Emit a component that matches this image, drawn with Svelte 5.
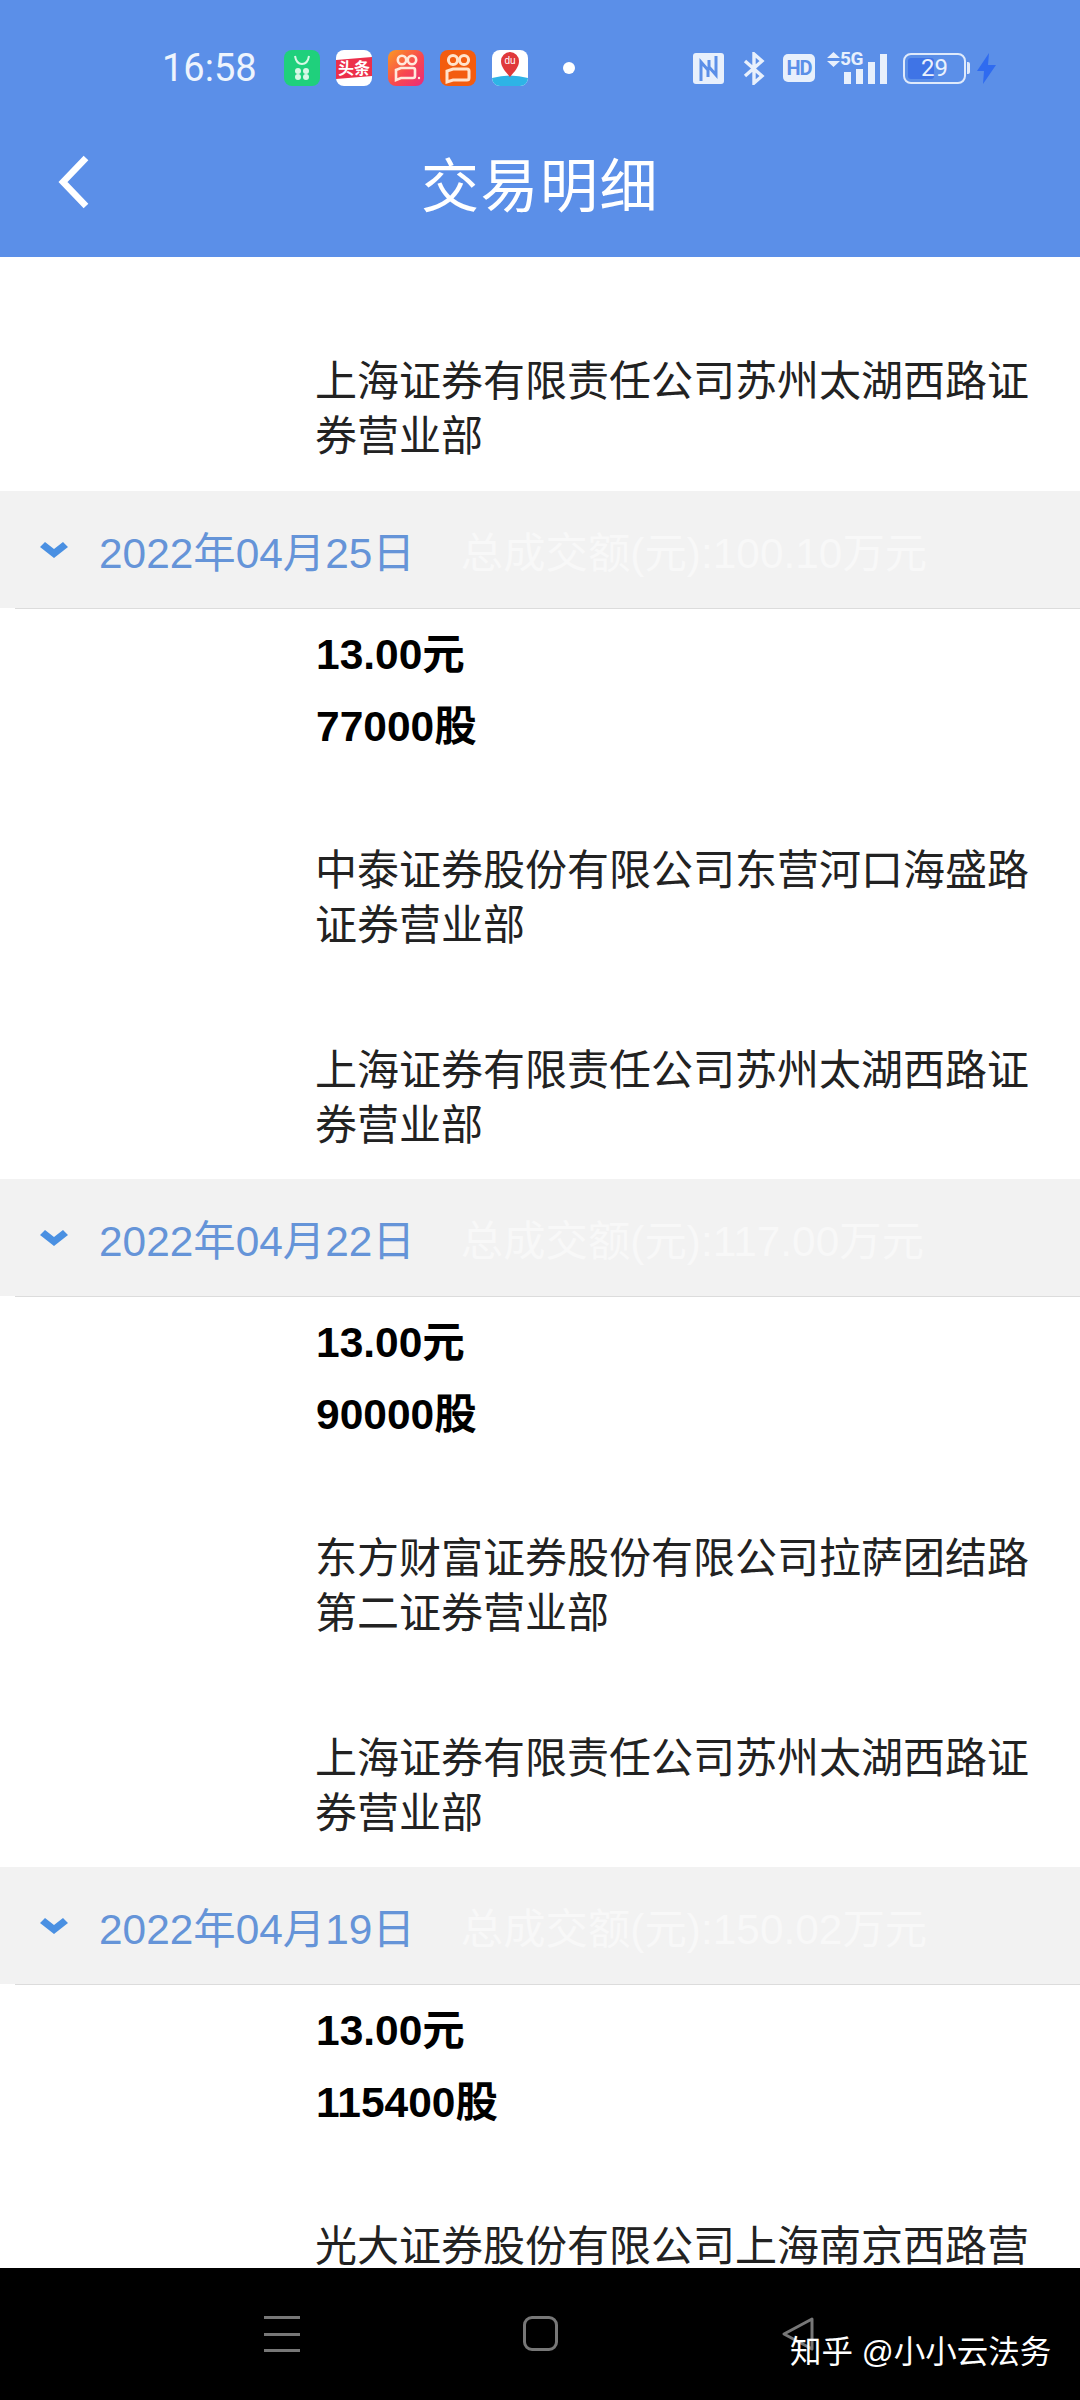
<script>
  const sections = [
    { date: '2022年04月25日', total: '总成交额(元):100.10万元', price: '13.00元', qty: '77000股', buy: '中泰证券股份有限公司东营河口海盛路证券营业部', sell: '上海证券有限责任公司苏州太湖西路证券营业部' },
    { date: '2022年04月22日', total: '总成交额(元):117.00万元', price: '13.00元', qty: '90000股', buy: '东方财富证券股份有限公司拉萨团结路第二证券营业部', sell: '上海证券有限责任公司苏州太湖西路证券营业部' },
    { date: '2022年04月19日', total: '总成交额(元):150.02万元', price: '13.00元', qty: '115400股', buy: '光大证券股份有限公司上海南京西路营业部', sell: '' }
  ];
</script>

<div class="screen">
  <header class="header">
    <div class="status">
      <span class="time">16:58</span>
      <div class="apps">
        <svg class="app" viewBox="0 0 36 36">
          <rect width="36" height="36" rx="8" fill="#1fd07c"/>
          <path d="M11 6c1 6 4 8 7 8s6-2 7-8" fill="none" stroke="#d8f8e6" stroke-width="2"/>
          <g fill="#d8f8e6"><circle cx="14" cy="21" r="3"/><circle cx="22" cy="21" r="3"/><circle cx="14" cy="27" r="3"/><circle cx="22" cy="27" r="3"/></g>
        </svg>
        <svg class="app" viewBox="0 0 36 36">
          <rect width="36" height="36" rx="8" fill="#fff"/>
          <path d="M0 10L36 7V26L0 29Z" fill="#ec2f4b"/>
          <text x="18" y="24" text-anchor="middle" class="toutiao">头条</text>
        </svg>
        <svg class="app" viewBox="0 0 36 36">
          <defs><linearGradient id="ks" x1="0" y1="0" x2="1" y2="1"><stop offset="0" stop-color="#fb9a22"/><stop offset=".55" stop-color="#f8484f"/><stop offset="1" stop-color="#e92a7c"/></linearGradient></defs>
          <rect width="36" height="36" rx="8" fill="url(#ks)"/>
          <g fill="none" stroke="#ffe9dc" stroke-width="2.6"><circle cx="14" cy="10" r="4.2"/><circle cx="24" cy="10" r="4.2"/><path d="M13 18h12a2 2 0 0 1 2 2v6a2 2 0 0 1-2 2H13l-5 2v-10z"/></g>
          <circle cx="31" cy="28" r="1.2" fill="#ffe9dc"/>
        </svg>
        <svg class="app" viewBox="0 0 36 36">
          <rect width="36" height="36" rx="8" fill="#f35c0f"/>
          <g fill="none" stroke="#ffe3cc" stroke-width="3"><circle cx="13" cy="10" r="4.6"/><circle cx="24" cy="10" r="4.6"/><path d="M13 19h14a2 2 0 0 1 2 2v7a2 2 0 0 1-2 2H13l-6 2v-11z"/></g>
        </svg>
        <svg class="app" viewBox="0 0 36 36">
          <rect width="36" height="36" rx="8" fill="#fff"/>
          <path d="M0 28q18-5 36 0v0a8 8 0 0 1-8 8H8a8 8 0 0 1-8-8z" fill="#2eb4e6"/>
          <path d="M18 27C13 21 9 17 9 11a9 9 0 0 1 18 0c0 6-4 10-9 16z" fill="#e0393b"/>
          <text x="18" y="14" text-anchor="middle" class="du">du</text>
        </svg>
      </div>
      <span class="dot"></span>
      <div class="sys">
        <svg class="nfc" viewBox="0 0 31 31"><rect width="31" height="31" rx="3" fill="#e8f0fc"/><path d="M8 28V9l7 8v7M23 3v19l-7-8V7" fill="none" stroke="#5b8fe8" stroke-width="3"/></svg>
        <svg class="bt" viewBox="0 0 22 33"><path d="M2 9l17 15-8 7V2l8 7L2 24" fill="none" stroke="#e8f0fc" stroke-width="3.4"/></svg>
        <span class="hd">HD</span>
        <div class="net">
          <svg class="arrows" viewBox="0 0 13 15"><path d="M6.5 0L13 6H0zM0 9h13l-6.5 6z" fill="#e8f0fc"/></svg>
          <span class="fiveg">5G</span>
          <div class="bars"><i class="b1"></i><i class="b2"></i><i class="b3"></i><i class="b4"></i></div>
        </div>
        <div class="batt">
          <div class="batt-body"><span class="batt-fill"></span><span class="batt-num">29</span></div>
          <span class="nub"></span>
        </div>
        <svg class="bolt" viewBox="0 0 19 31"><path d="M12 0L0 18h7l-1 13L19 12h-8z" fill="#2f6bf0"/></svg>
      </div>
    </div>
    <div class="nav">
      <svg class="back" viewBox="0 0 32 54"><path d="M28 3L5 27l23 24" fill="none" stroke="#fff" stroke-width="6.5"/></svg>
      <h1>交易明细</h1>
    </div>
  </header>

  <main class="list">
    <div class="text-row first">上海证券有限责任公司苏州太湖西路证券营业部</div>
    {#each sections as s}
      <section>
        <div class="group">
          <svg class="chev" viewBox="0 0 28 16"><path d="M0 5l5-5 9 7 9-7 5 5-14 11z" fill="#4a90e2"/></svg>
          <span class="date">{s.date}</span>
          <span class="total">{s.total}</span>
        </div>
        <div class="rule"></div>
        <div class="value first-value">{s.price}</div>
        <div class="value">{s.qty}</div>
        <div class="text-row buy">{s.buy}</div>
        {#if s.sell}<div class="text-row sell">{s.sell}</div>{/if}
      </section>
    {/each}
  </main>

  <footer class="bar">
    <div class="menu"><i></i><i></i><i></i></div>
    <span class="home"></span>
    <svg class="tri" viewBox="0 0 34 36"><path d="M31 3L3 18l28 15z" fill="none" stroke="#777" stroke-width="3" stroke-linejoin="round"/></svg>
    <span class="mark">知乎 @小小云法务</span>
  </footer>
</div>

<style>
  :global(body) { margin: 0; background: #fff; }
  .screen {
    width: 1080px; height: 2400px; overflow: hidden;
    display: flex; flex-direction: column;
    font-family: "Liberation Sans", "Noto Sans CJK SC", sans-serif;
  }
  .header { background: #5b8fe8; height: 257px; flex: none; }
  .status { height: 136px; display: flex; align-items: center; padding-left: 162px; position: relative; }
  .time { font-family: Roboto, sans-serif; font-size: 38px; color: #eef4fd; width: 122px; }
  .apps { display: flex; gap: 16px; }
  .app { width: 36px; height: 36px; display: block; }
  .toutiao { font: 700 16px "Noto Sans CJK SC", sans-serif; fill: #fff; }
  .du { font: 400 10px "Liberation Sans", sans-serif; fill: #fff; }
  .dot { width: 12px; height: 12px; border-radius: 50%; background: #fff; margin-left: 35px; }
  .sys { display: flex; align-items: center; margin-left: 118px; }
  .nfc { width: 31px; height: 31px; }
  .bt { width: 22px; height: 33px; margin-left: 19px; }
  .hd {
    width: 32px; height: 28px; margin-left: 18px; border-radius: 5px; background: #e8f0fc; color: #5b8fe8;
    font: 700 20px/28px "Roboto", sans-serif; text-align: center; letter-spacing: -1px;
  }
  .net { width: 60px; height: 32px; margin-left: 12px; position: relative; }
  .arrows { position: absolute; left: 0; top: 0; width: 13px; height: 15px; }
  .fiveg { position: absolute; left: 13px; top: -2px; font: 700 19px/18px Roboto, sans-serif; color: #e8f0fc; letter-spacing: -.5px; }
  .bars { position: absolute; right: 0; bottom: 0; display: flex; align-items: flex-end; gap: 5px; }
  .bars i { display: block; width: 7px; background: #e8f0fc; }
  .b1 { height: 12px; } .b2 { height: 15px; } .b3 { height: 22px; } .b4 { height: 30px; }
  .batt { display: flex; align-items: center; margin-left: 16px; }
  .batt-body { width: 63px; height: 31px; box-sizing: border-box; border: 2.5px solid #dfeafb; border-radius: 8px; position: relative; overflow: hidden; }
  .batt-fill { position: absolute; left: 3px; top: 3px; bottom: 3px; width: 26px; background: #3f74e6; border-radius: 3px; }
  .batt-num { position: absolute; inset: 0; text-align: center; font: 400 24px/26px Roboto, sans-serif; color: #eaf1fd; }
  .nub { width: 3px; height: 12px; margin-left: 1px; background: #dfeafb; border-radius: 0 2px 2px 0; }
  .bolt { width: 19px; height: 31px; margin-left: 7px; }
  .nav { height: 98px; display: flex; align-items: center; justify-content: center; position: relative; }
  .back { position: absolute; left: 58px; top: 19px; width: 32px; height: 54px; }
  h1 { margin: -6px 0 0; font-size: 58px; font-weight: 400; color: #fff; letter-spacing: 1.5px; }

  .list { flex: 1; min-height: 0; overflow: hidden; }
  .text-row { padding: 0 36px 0 315px; font-size: 42px; line-height: 55px; color: #222; }
  .first { margin-top: 97px; margin-bottom: 27px; }
  .group { height: 117px; background: #f2f2f2; display: flex; align-items: center; position: relative; }
  .chev { width: 28px; height: 16px; margin-left: 40px; flex: none; }
  .date { font-size: 42.4px; color: #6594d8; margin-left: 31px; }
  .total { font-size: 42.4px; color: #f8f8f8; margin-left: 46px; }
  .rule { height: 1px; background: #dcdcdc; margin: 0 0 0 15px; }
  .value { padding-left: 316px; font-size: 42.5px; font-weight: 700; line-height: 72px; color: #000; }
  .first-value { margin-top: 10px; }
  .buy { margin-top: 80px; }
  .sell { margin-top: 90px; margin-bottom: 26px; }

  .bar { height: 132px; flex: none; background: #000; position: relative; }
  .menu { position: absolute; left: 264px; top: 48px; width: 36px; height: 36px; display: flex; flex-direction: column; justify-content: space-between; }
  .menu i { display: block; height: 3px; background: #777; }
  .home { position: absolute; left: 523px; top: 48px; width: 35px; height: 35px; box-sizing: border-box; border: 3px solid #777; border-radius: 9px; }
  .tri { position: absolute; left: 781px; top: 48px; width: 34px; height: 36px; }
  .mark { position: absolute; left: 790px; top: 67px; font-size: 31.5px; line-height: 34px; color: #fff; white-space: nowrap; }
</style>
